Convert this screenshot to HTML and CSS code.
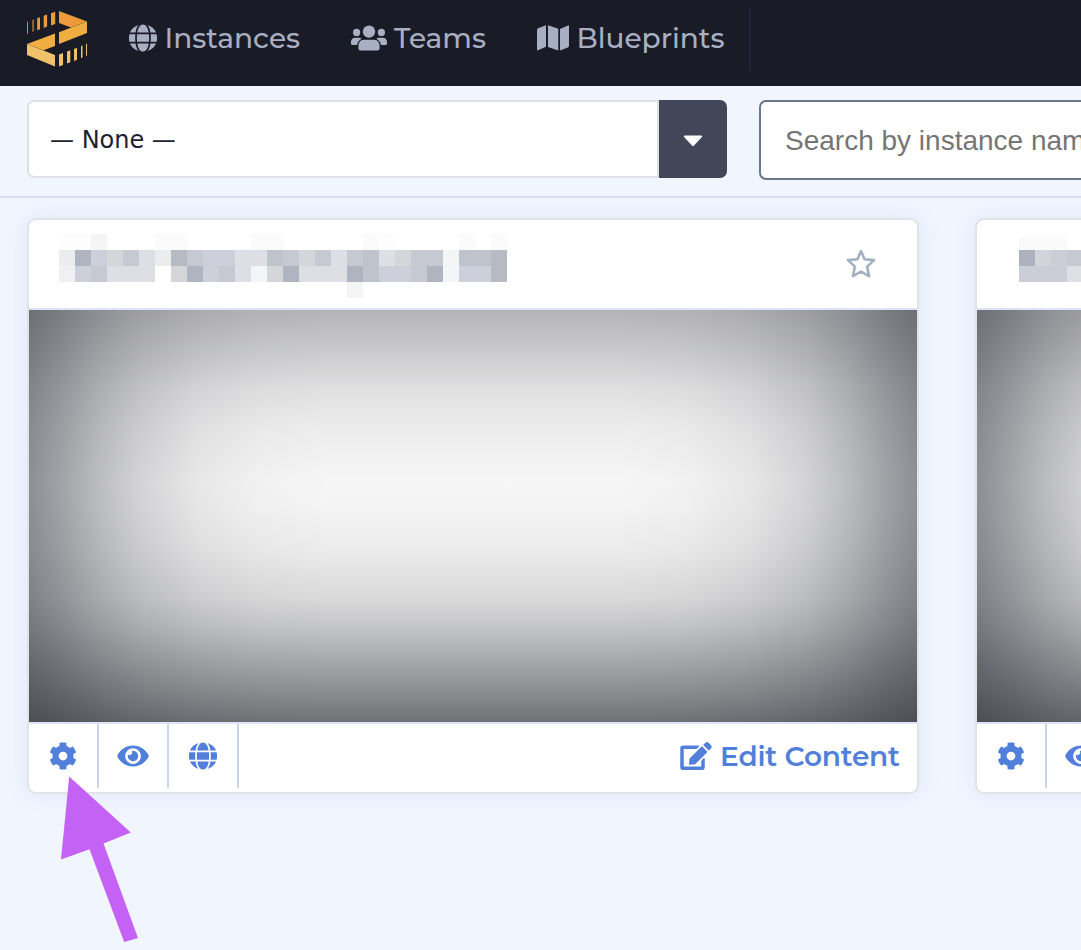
FILE: index.html
```html
<!DOCTYPE html>
<html lang="en">
<head>
<meta charset="utf-8">
<title>Instances</title>
<link rel="stylesheet" href="styles.css">
</head>
<body>
<svg class="defs" width="0" height="0" aria-hidden="true">
  <symbol id="globe" viewBox="0 0 28 28">
    <path d="M8.3 8.6C9 3.6 11.2.4 14 .4s5 3.200 5.700 8.200zM.9 8.600A13.700 13.700 0 0 1 9.500 1.100C7.900 3 7 5.600 6.600 8.600zM18.500 1.100a13.700 13.700 0 0 1 8.600 7.500h-5.700C21 5.600 20.100 3 18.500 1.100zM8.100 10.300h11.800c.3 2.500.3 4.900 0 7.400H8.100c-.3-2.500-.3-4.900 0-7.400zM.4 10.300h6c-.3 2.500-.3 4.900 0 7.400h-6c-.6-2.500-.6-4.900 0-7.400zM21.600 10.300h6c.6 2.500.6 4.900 0 7.400h-6c.3-2.500.3-4.900 0-7.400zM8.300 19.400h11.400c-.7 5-2.900 8.200-5.700 8.200s-5-3.200-5.700-8.200zM.9 19.400h5.700c.4 3 1.300 5.600 2.900 7.500A13.700 13.700 0 0 1 .9 19.400zM21.400 19.400h5.700a13.700 13.700 0 0 1-8.600 7.500c1.600-1.900 2.500-4.500 2.900-7.500z"/>
  </symbol>
  <symbol id="gear" viewBox="0 0 512 512">
    <path d="M487.400 315.700l-42.600-24.600c4.300-23.200 4.300-47 0-70.200l42.600-24.600c4.900-2.800 7.100-8.600 5.500-14-11.100-35.600-30-67.800-54.700-94.600-3.800-4.100-10-5.100-14.800-2.300L380.800 110c-17.900-15.400-38.500-27.300-60.800-35.100V25.800c0-5.600-3.900-10.500-9.400-11.700-36.700-8.200-74.300-7.800-109.200 0-5.500 1.200-9.400 6.100-9.400 11.700V75c-22.200 7.900-42.800 19.800-60.800 35.100L88.700 85.500c-4.900-2.800-11-1.900-14.800 2.300-24.700 26.700-43.600 58.900-54.700 94.600-1.700 5.400.6 11.200 5.500 14L67.300 221c-4.300 23.200-4.300 47 0 70.200l-42.600 24.600c-4.900 2.800-7.100 8.600-5.500 14 11.100 35.600 30 67.800 54.700 94.600 3.800 4.100 10 5.100 14.800 2.300l42.600-24.600c17.900 15.400 38.500 27.300 60.800 35.100v49.200c0 5.600 3.900 10.500 9.400 11.700 36.700 8.200 74.300 7.800 109.200 0 5.500-1.200 9.400-6.100 9.400-11.700v-49.200c22.200-7.900 42.800-19.800 60.800-35.100l42.600 24.600c4.900 2.800 11 1.900 14.800-2.300 24.700-26.700 43.600-58.900 54.700-94.600 1.500-5.500-.7-11.300-5.600-14.100zM256 336c-44.100 0-80-35.900-80-80s35.900-80 80-80 80 35.900 80 80-35.900 80-80 80z"/>
  </symbol>
  <symbol id="eye" viewBox="0 0 576 512">
    <path d="M572.520 241.400C518.290 135.590 410.930 64 288 64S57.680 135.640 3.480 241.410a32.350 32.350 0 0 0 0 29.190C57.710 376.410 165.070 448 288 448s230.320-71.640 284.520-177.410a32.350 32.350 0 0 0 0-29.190zM288 400a144 144 0 1 1 144-144 143.930 143.930 0 0 1-144 144zm0-240a95.310 95.310 0 0 0-25.310 3.790 47.850 47.850 0 0 1-66.900 66.900A95.780 95.780 0 1 0 288 160z"/>
  </symbol>
</svg>

<header class="topbar">
  <svg class="logo" viewBox="0 0 60 56">
    <g fill="#ed9a3c">
      <path d="M32 0 60 10.500 44 16.500 32 12z"/>
      <path d="M24 2.300 28.200.7V13L24 14.500zM16.700 4.800l3.400-1.300v12l-3.400 1.400zM10.200 7.200l2.800-1v12l-2.800 1.100z"/>
      <path opacity=".6" d="M5.200 9l1.900-.7v12l-1.900.8z"/>
      <path d="M0 11l.9-.4v12L0 23z"/>
    </g>
    <path fill="#f0ae41" d="M60 10.500V22L32 33V21.200zM28 22.500V35L16.500 39.200 0 33z"/>
    <path fill="#f0c06a" d="M0 33l28 11V55.500L0 44z"/>
    <path fill="#f0c06a" d="M32 43.500l4-1.600V54l-4 1.600zM40 40.600l3.300-1.300v12L40 52.600zM47 37.900l3-1.200v12l-3 1.200zM54 35.100l1.500-.6v12L54 47zM59 33l1-.4v12l-1 .4z"/>
  </svg>
  <nav class="nav">
    <a class="nav-item instances"><svg class="ico-globe"><use href="#globe"/></svg><span>Instances</span></a>
    <a class="nav-item teams">
      <svg class="ico-users" viewBox="0 0 36 26"><circle cx="18" cy="6.600" r="6.200"/><circle cx="5.600" cy="7.400" r="3.600"/><circle cx="30.400" cy="7.400" r="3.600"/><path d="M13 14.800h10c4 0 5.600 3.200 5.600 6.200v2.300c0 1.400-.8 2.100-2.100 2.100h-17c-1.300 0-2.100-.7-2.100-2.100V21c0-3 1.600-6.200 5.600-6.200zM4 12.700h4c1.100 0 2 .4 2.700 1C8 15.200 6.300 17.400 6 20H1.700C.7 20 0 19.500 0 18.500v-1.700c0-2.300 1.700-4.100 4-4.100zM32 12.700h-4c-1.100 0-2 .4-2.700 1 2.700 1.500 4.400 3.700 4.700 6.300h4.300c1 0 1.700-.5 1.700-1.500v-1.700c0-2.300-1.700-4.100-4-4.100z"/></svg>
      <span>Teams</span></a>
    <a class="nav-item blueprints">
      <svg class="ico-map" viewBox="0 0 32 26"><path d="M0 4.900c0-.8.400-1.400 1.100-1.700L9 .2v21.600L.9 25.300c-.5.200-.9-.1-.9-.6zM11 .2l10.300 3.500v21.900L11 22zM31.100.4c.5-.2.900.1.900.6v19.700c0 .8-.4 1.400-1.100 1.700L23 25.500V3.900z"/></svg>
      <span>Blueprints</span></a>
  </nav>
</header>

<section class="filters">
  <div class="select"><span class="select-value">— None —</span>
    <span class="select-toggle"><svg width="20" height="12" viewBox="0 0 20 12"><path d="M1.800.5h16.400c1 0 1.300.9.700 1.500l-7.800 8.500c-.6.700-1.600.7-2.200 0L1.100 2C.5 1.400.8.500 1.800.500z"/></svg></span>
  </div>
  <div class="search">Search by instance name</div>
</section>

<main class="cards">
  <article class="card">
    <div class="card-head">
      <svg class="mosaic" viewBox="0 0 28 4" preserveAspectRatio="none" shape-rendering="crispEdges">
        <path fill="#fdfdfd" d="M0 0h2v1H0zM20 0h1v1H20z"/>
        <path fill="#f5f5f6" d="M2 0h1v1H2z"/>
        <path fill="#fbfbfc" d="M6 0h2v1H6zM12 0h2v1H12zM19 0h1v1H19zM25 0h1v1H25zM27 0h1v1H27z"/>
        <path fill="#ebecee" d="M0 1h1v1H0zM6 1h1v1H6z"/>
        <path fill="#f0f0f2" d="M0 2h1v1H0z"/>
        <path fill="#b0b4c0" d="M1 1h1v1H1zM8 2h1v1H8zM14 2h1v1H14zM18 2h1v1H18zM23 2h1v1H23z"/>
        <path fill="#b6bac3" d="M7 1h1v1H7zM27 1h1v1H27zM27 2h1v1H27z"/>
        <path fill="#cdd0da" d="M2 1h1v1H2zM1 2h1v1H1zM9 1h2v1H9zM9 2h1v1H9zM20 2h2v1H20zM25 2h2v1H25z"/>
        <path fill="#c6c9d2" d="M4 1h1v1H4zM2 2h1v1H2zM8 1h1v1H8zM10 2h1v1H10zM14 1h1v1H14zM16 1h1v1H16zM18 1h1v1H18zM22 1h2v1H22zM22 2h1v1H22z"/>
        <path fill="#d4d6da" d="M3 1h1v1H3zM7 2h1v1H7zM13 2h1v1H13zM15 1h1v1H15zM21 1h1v1H21z"/>
        <path fill="#dedfe4" d="M5 1h1v1H5zM3 2h3v1H3zM11 1h2v1H11zM11 2h1v1H11zM17 1h1v1H17zM15 2h3v1H15zM20 1h1v1H20z"/>
        <path fill="#bfc3cc" d="M13 1h1v1H13zM19 1h1v1H19zM19 2h1v1H19zM25 1h2v1H25z"/>
        <path fill="#f4f5f7" d="M12 2h1v1H12zM24 1h1v2H24zM18 3h1v1H18z"/>
      </svg>
      <svg class="star" viewBox="0 0 30 30"><path d="M15 2l3.600 8.200 9.500.9-7 6.500 2 9.600L15 22.600l-8.100 4.600 2-9.600-7-6.500 9.500-.9z"/></svg>
    </div>
    <div class="preview"></div>
    <div class="card-foot">
      <a class="action"><svg class="ico-gear"><use href="#gear"/></svg></a>
      <a class="action"><svg class="ico-eye"><use href="#eye"/></svg></a>
      <a class="action"><svg class="ico-globe"><use href="#globe"/></svg></a>
      <a class="edit">
        <svg class="ico-edit" viewBox="0 0 576 512"><path d="M402.600 83.200l90.200 90.200c3.800 3.800 3.800 10 0 13.800L274.400 405.600l-92.800 10.300c-12.400 1.400-22.900-9.100-21.500-21.500l10.300-92.800L388.800 83.200c3.800-3.800 10-3.800 13.800 0zm162-22.900l-48.800-48.800c-15.200-15.200-39.900-15.200-55.200 0l-35.400 35.400c-3.800 3.800-3.800 10 0 13.800l90.200 90.200c3.800 3.800 10 3.800 13.800 0l35.400-35.400c15.200-15.300 15.200-40 0-55.200zM384 346.200V448H64V128h229.800c3.200 0 6.200-1.300 8.500-3.500l40-40c7.600-7.600 2.200-20.500-8.500-20.500H48C21.500 64 0 85.500 0 112v352c0 26.500 21.500 48 48 48h352c26.500 0 48-21.500 48-48V306.200c0-10.700-12.900-16-20.500-8.500l-40 40c-2.200 2.300-3.500 5.300-3.500 8.500z"/></svg>
        <span>Edit Content</span></a>
    </div>
  </article>

  <article class="card">
    <div class="card-head second">
      <svg class="mosaic" viewBox="0 0 28 4" preserveAspectRatio="none" shape-rendering="crispEdges">
        <path fill="#fafafb" d="M0 .2h3V1H0z"/>
        <path fill="#adb1bd" d="M0 1h1v1H0z"/>
        <path fill="#d3d4d9" d="M1 1h1v1H1z"/>
        <path fill="#cbced7" d="M2 1h1v1H2zM0 2h3v1H0z"/>
        <path fill="#c6c9d2" d="M3 1h1v1H3z"/>
        <path fill="#dfe0e4" d="M3 2h1v1H3z"/>
      </svg>
    </div>
    <div class="preview"></div>
    <div class="card-foot">
      <a class="action"><svg class="ico-gear"><use href="#gear"/></svg></a>
      <a class="action"><svg class="ico-eye"><use href="#eye"/></svg></a>
    </div>
  </article>
</main>

<svg class="pointer" viewBox="0 0 78 166"><path d="M9.200.5 70.800 56.500 43.500 67.500 78 162 64.200 166 29.500 73.200 1 83.500z"/></svg>
</body>
</html>
```
FILE: styles.css
```css
* { box-sizing: border-box; }
body {
  margin: 0;
  width: 1081px;
  height: 950px;
  overflow: hidden;
  background: #f0f5fe;
  font-family: Montserrat, Inter, sans-serif;
}
svg { display: block; flex: none; }
.defs { position: absolute; }

.topbar {
  display: flex;
  height: 86px;
  padding: 8px 0 0 27px;
  background: #191b26;
}
.logo { width: 60px; height: 56px; margin-top: 3px; }
.nav {
  display: flex;
  width: 664px;
  height: 62px;
  padding-left: 42px;
  border-right: 2px solid #20263c;
}
.nav-item {
  display: flex;
  align-items: center;
  height: 60px;
  color: #a9afc2;
  fill: #a9afc2;
  font-size: 28px;
  font-weight: 500;
  white-space: nowrap;
}
.instances { width: 222px; gap: 7.500px; }
.teams { width: 186px; gap: 7px; }
.blueprints { gap: 7.500px; }
.ico-globe { width: 28px; height: 28px; }
.ico-users { width: 36px; height: 26px; }
.ico-map { width: 32px; height: 26px; }

.filters {
  display: flex;
  gap: 32px;
  height: 112px;
  padding: 14px 0 0 27px;
  border-bottom: 2px solid #d6def0;
}
.select {
  display: flex;
  flex: none;
  justify-content: space-between;
  width: 700px;
  height: 78px;
  border: 2px solid #dfe0e2;
  border-right: 0;
  border-radius: 7px;
  background: #fff;
}
.select-value {
  flex: 1;
  padding-left: 21px;
  border-right: 2px solid #dfe0e2;
  color: #1d2130;
  font: 24px/77px "DejaVu Sans", sans-serif;
  height: 74px;
}
.select-toggle {
  display: flex;
  align-items: center;
  justify-content: center;
  width: 68px;
  height: 78px;
  margin: -2px 0;
  padding-top: 4px;
  border-radius: 0 7px 7px 0;
  background: #424659;
  fill: #fff;
}
.search {
  flex: none;
  width: 322px;
  height: 80px;
  padding-left: 24px;
  overflow: hidden;
  border: 2px solid #6a788f;
  border-right: 0;
  border-radius: 7px 0 0 7px;
  background: #fff;
  color: #757575;
  font: 28px/77px "Liberation Sans", Arial, sans-serif;
  white-space: nowrap;
}

.cards {
  display: flex;
  gap: 56px;
  padding: 20px 0 0 27px;
}
.card {
  flex: none;
  width: 892px;
  height: 576px;
  overflow: hidden;
  border: 2px solid #e1e3e5;
  border-radius: 9px;
  background: #fff;
  box-shadow: 0 0 20px rgba(150, 175, 230, .2);
}
.card-head {
  display: flex;
  justify-content: space-between;
  height: 90px;
  padding: 14px 41px 0 30px;
  border-bottom: 2px solid #dce4fa;
}
.card-head.second { padding-left: 42px; }
.mosaic { width: 448px; height: 64px; }
.star {
  width: 30px;
  height: 30px;
  margin-top: 15px;
  fill: none;
  stroke: #a5b0c0;
  stroke-width: 2.600;
  stroke-linejoin: round;
}
.preview {
  height: 412px;
  background:
    linear-gradient(to right, rgba(42,44,54,.51), rgba(42,44,54,.4) 4%, rgba(42,44,54,.28) 8%, rgba(42,44,54,.17) 12.500%, rgba(42,44,54,.07) 19%, rgba(42,44,54,.02) 26%, rgba(42,44,54,0) 34%),
    linear-gradient(to left, rgba(42,44,54,.51), rgba(42,44,54,.4) 4%, rgba(42,44,54,.28) 8%, rgba(42,44,54,.17) 12.500%, rgba(42,44,54,.07) 19%, rgba(42,44,54,.02) 26%, rgba(42,44,54,0) 34%),
    linear-gradient(to top, rgba(40,42,48,.65), rgba(40,42,48,.52) 7%, rgba(40,42,48,.38) 15%, rgba(40,42,48,.24) 23%, rgba(40,42,48,.14) 30%, rgba(40,42,48,.05) 42%, rgba(40,42,48,.01) 52%, rgba(40,42,48,0) 60%),
    linear-gradient(to bottom, rgba(40,41,50,.32), rgba(40,41,50,.21) 10%, rgba(40,41,50,.11) 19%, rgba(40,41,50,.045) 29%, rgba(40,41,50,0) 42%),
    #f6f6f6;
}
.card-foot {
  display: flex;
  height: 70px;
  border-top: 2px solid #dce4fa;
  color: #517fda;
  fill: #517fda;
}
.action {
  display: flex;
  align-items: center;
  justify-content: center;
  width: 70px;
  height: 64px;
  padding-bottom: 1px;
  border-right: 2px solid #c8d4e9;
}
.ico-gear { width: 28px; height: 28px; }
.ico-eye { width: 32px; height: 28px; }
.edit {
  display: flex;
  align-items: center;
  gap: 8px;
  width: 219px;
  height: 64px;
  margin-left: auto;
  margin-right: 18px;
  font-size: 28px;
  font-weight: 600;
  letter-spacing: -.2px;
  white-space: nowrap;
}
.ico-edit { width: 32px; height: 28px; }

.pointer {
  position: absolute;
  left: 60px;
  top: 776px;
  width: 78px;
  height: 166px;
  fill: #c562f6;
}
```
